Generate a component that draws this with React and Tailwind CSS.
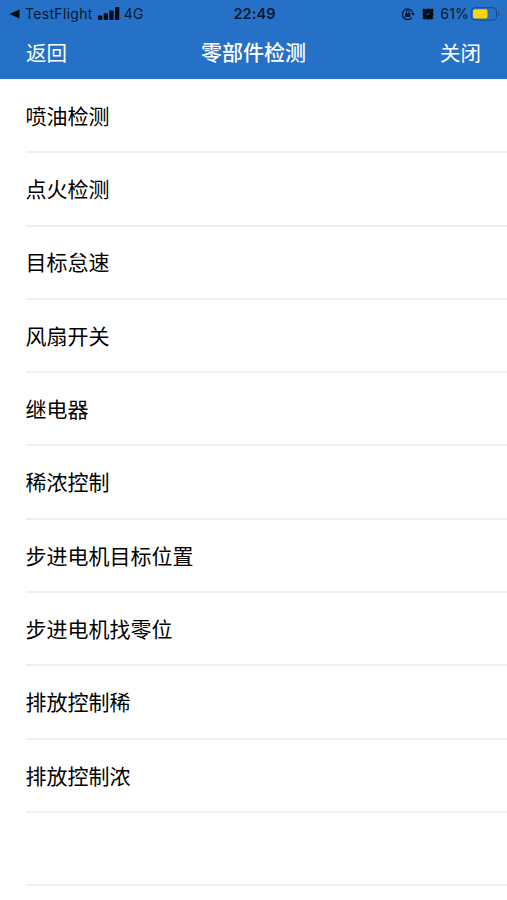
import React from 'react';

const ITEMS = [
  '喷油检测', '点火检测', '目标怠速', '风扇开关', '继电器', '稀浓控制',
  '步进电机目标位置', '步进电机找零位', '排放控制稀', '排放控制浓', ''
];

const StatusBar = () => (
  <div className="grid grid-cols-3 items-center h-[27px] pl-[9px] pr-[7px] text-[14px] text-[#06182f] font-['Inter','Liberation_Sans',sans-serif]">
    <div className="flex items-center whitespace-nowrap">
      <svg width="11" height="10" viewBox="0 0 11 10" fill="#020a14">
        <path d="M0.5 5 L10.5 0.5 V9.5 Z" />
      </svg>
      <span className="ml-[5px] tracking-[0.32px]">TestFlight</span>
      <svg className="ml-[5px]" width="22" height="13" viewBox="0 0 22 13" fill="#020a14">
        <rect x="0" y="8.5" width="4.3" height="4.5" rx="1" />
        <rect x="5.7" y="6.3" width="4.3" height="6.7" rx="1" />
        <rect x="11.3" y="3.5" width="4.3" height="9.5" rx="1" />
        <rect x="17" y="0" width="4.3" height="13" rx="1" />
      </svg>
      <span className="ml-[4px] tracking-[0.3px]">4G</span>
    </div>
    <div className="text-center font-semibold text-[14.5px] leading-[20px] tracking-[0.1px]">22:49</div>
    <div className="flex items-center justify-end">
      <svg width="14" height="14" viewBox="0 0 14 14" fill="none" stroke="currentColor">
        <path d="M10.9 10.6 A5.3 5.3 0 1 1 11.7 5.4" strokeWidth="1.3" />
        <path d="M9.9 6 H14 L12.1 8.8 Z" fill="currentColor" stroke="none" />
        <rect x="4.2" y="6.2" width="5.2" height="3.8" rx="0.6" fill="currentColor" stroke="none" />
        <path d="M5.4 6.5 V5 A1.4 1.4 0 0 1 8.2 5 V6.5" />
      </svg>
      <svg className="ml-[6px]" width="14" height="14" viewBox="0 0 14 14">
        <circle cx="7" cy="7" r="5.5" fill="#020a14" />
        <path d="M2 4 L4 2.2 M10 2.2 L12 4 M3.5 10.8 L2.6 12 M10.5 10.8 L11.4 12" stroke="#020a14" strokeWidth="2.8" />
        <path d="M5 7.6 H7.2 L8.4 5.2" stroke="#2671c8" strokeWidth="0.7" fill="none" />
      </svg>
      <span className="ml-[5px] tracking-[0.2px]">61%</span>
      <svg className="ml-[2px]" width="29" height="14" viewBox="0 0 29 14">
        <rect x="0.5" y="0.7" width="25" height="12.4" rx="3.2" fill="none" stroke="#184b87" />
        <rect x="2" y="2.2" width="14.5" height="9.4" rx="1.8" fill="#ffd20a" />
        <path d="M27 5 Q29.5 7 27 9 Z" fill="#184b87" />
      </svg>
    </div>
  </div>
);

const App = () => {
  return (
    <div className="h-[900px] overflow-hidden bg-white font-['Noto_Sans_CJK_SC',sans-serif]">
      <header className="h-[79px] bg-[#2671c8]">
        <StatusBar />
        <nav className="grid grid-cols-3 items-center h-[50px] px-[26px] text-[20.5px] text-white">
          <button className="text-left">返回</button>
          <h1 className="text-center font-medium text-[21px]">零部件检测</h1>
          <button className="text-right">关闭</button>
        </nav>
      </header>
      <ul className="pl-[25.5px] pt-px">
        {ITEMS.map((item, index) => (
          <li key={index} className="flex items-center h-[73.3px] border-b-2 border-[#efefef] text-[21px] text-black">
            {item}
          </li>
        ))}
      </ul>
    </div>
  );
};

export default App;
